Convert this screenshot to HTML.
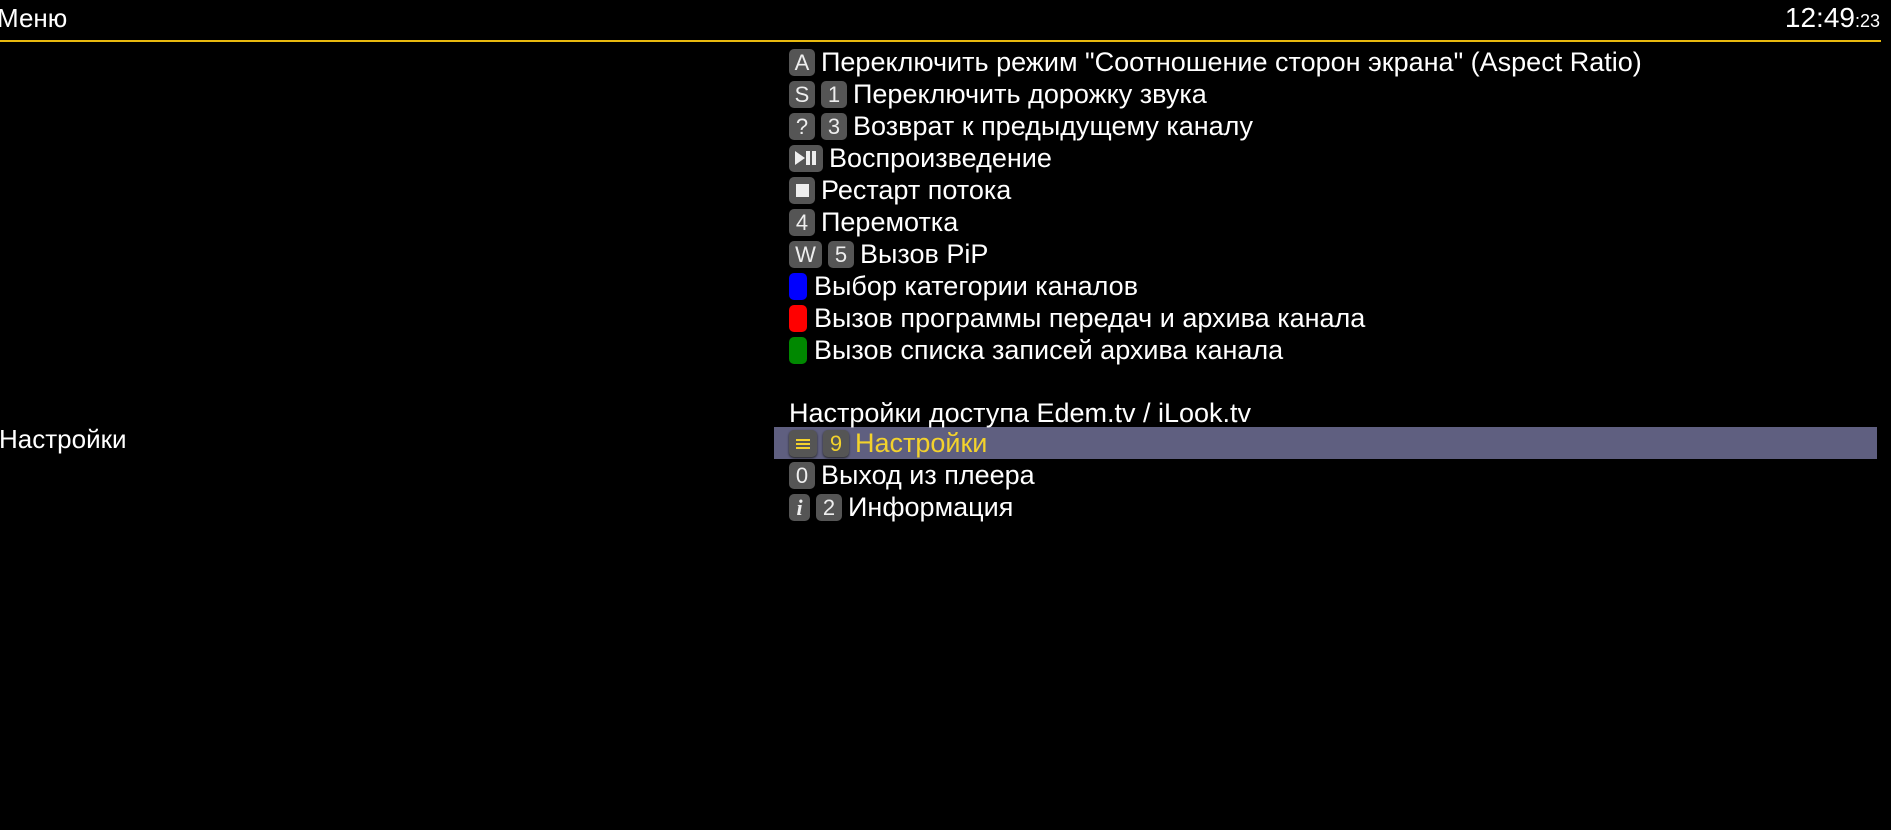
<!DOCTYPE html>
<html><head><meta charset="utf-8"><style>
html,body{margin:0;padding:0;background:#000;width:1891px;height:830px;overflow:hidden;font-family:"Liberation Sans",sans-serif;color:#fff}
.line{position:absolute;left:0;top:40px;width:1881px;height:2px;background:#e8b90f}
.title{position:absolute;left:-3px;top:3px;font-size:26px}
.clock{position:absolute;right:11px;top:2px;font-size:28px}
.clock small{font-size:18px}
.left{position:absolute;left:-1px;top:424px;font-size:26px}
.list{position:absolute;left:774px;top:46px;width:1103px}
.row{height:32px;line-height:32px;font-size:27px;padding-left:15px;white-space:nowrap;display:flex;align-items:center}
.row.sel{background:#5f5f80;color:#f3d22c}
.k{display:inline-block;min-width:26px;height:27px;line-height:27px;border-radius:5px;background:#555;color:#eee;text-align:center;font-size:22px;margin-right:6px;box-sizing:border-box;padding:0 3px;position:relative}
.sel .k{background:#555;color:#f3d22c;box-shadow:0 1px 2px #222}
.c{display:inline-block;width:18px;height:27px;border-radius:5px;margin-right:7px}
</style></head><body>
<div class="line"></div>
<div class="title">Меню</div><div class="clock">12:49<small>:23</small></div>
<div class="left">Настройки</div>
<div class="list">
<div class="row"><span class="k">A</span>Переключить режим "Соотношение сторон экрана" (Aspect Ratio)</div>
<div class="row"><span class="k">S</span><span class="k">1</span>Переключить дорожку звука</div>
<div class="row"><span class="k">?</span><span class="k">3</span>Возврат к предыдущему каналу</div>
<div class="row"><span class="k" style="width:34px"><svg width="26" height="18" viewBox="0 0 26 18" style="margin-top:4px"><path d="M2 2L12 9L2 16Z" fill="#eee"/><rect x="13" y="2" width="4" height="14" fill="#eee"/><rect x="19" y="2" width="4" height="14" fill="#eee"/></svg></span>Воспроизведение</div>
<div class="row"><span class="k"><span style="display:inline-block;width:13px;height:13px;background:#eee;margin-top:7px;vertical-align:top"></span></span>Рестарт потока</div>
<div class="row"><span class="k">4</span>Перемотка</div>
<div class="row"><span class="k" style="width:33px">W</span><span class="k">5</span>Вызов PiP</div>
<div class="row"><span class="c" style="background:#00f"></span>Выбор категории каналов</div>
<div class="row"><span class="c" style="background:#f00"></span>Вызов программы передач и архива канала</div>
<div class="row"><span class="c" style="background:#080"></span>Вызов списка записей архива канала</div>
<div class="row"></div>
<div class="row" style="height:29px">Настройки доступа Edem.tv / iLook.tv</div>
<div class="row sel"><span class="k" style="width:28px"><svg width="16" height="14" viewBox="0 0 16 14" style="margin-top:6px"><rect x="1" y="2" width="14" height="2" fill="#f3d22c"/><rect x="1" y="6" width="14" height="2" fill="#f3d22c"/><rect x="1" y="10" width="14" height="2" fill="#f3d22c"/></svg></span><span class="k">9</span>Настройки</div>
<div class="row"><span class="k">0</span>Выход из плеера</div>
<div class="row"><span class="k" style="min-width:21px;width:21px;font-weight:bold;font-style:italic;font-family:'Liberation Serif',serif">i</span><span class="k">2</span>Информация</div>
</div>
</body></html>
